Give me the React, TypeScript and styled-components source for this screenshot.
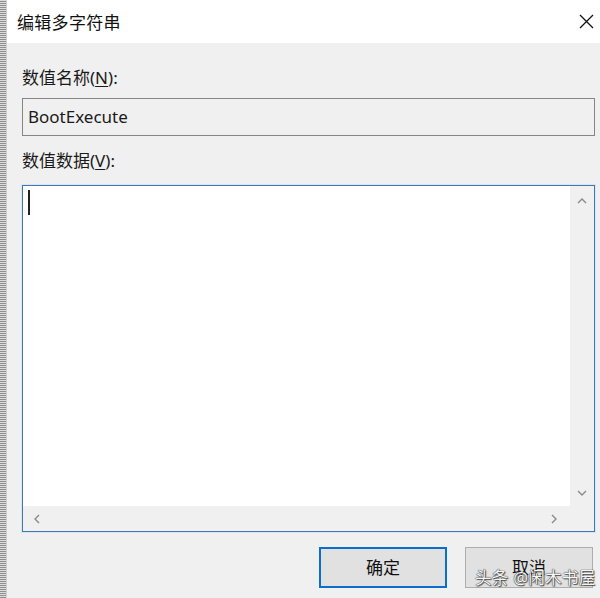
import React from "react";
import styled, { createGlobalStyle } from "styled-components";

const GlobalStyle = createGlobalStyle`
	html, body {
		margin: 0;
		padding: 0;
		background: #f0f0f0;
	}
	body {
		font-family: "Noto Sans", "Noto Sans CJK SC", sans-serif;
		color: #1a1a1a;
	}
`;

function Chevron({ dir }: { dir: "up" | "down" | "left" | "right" }) {
	const points = {
		up: "1,6 5,2 9,6",
		down: "1,2 5,6 9,2",
		left: "6,1 2,5 6,9",
		right: "2,1 6,5 2,9",
	}[dir];
	const vertical = dir === "up" || dir === "down";
	return (
		<svg width={vertical ? 10 : 8} height={vertical ? 8 : 10} viewBox={vertical ? "0 0 10 8" : "0 0 8 10"}>
			<polyline points={points} fill="none" stroke="#8a8a8a" strokeWidth="1.4" />
		</svg>
	);
}

export default function App() {
	return (
		<>
			<GlobalStyle />
			<Screen>
				<LeftStrip />
				<Dialog>
					<TitleBar>
						<Title>编辑多字符串</Title>
						<CloseButton>
							<svg width="15" height="15" viewBox="0 0 15 15">
								<path d="M1 1 L14 14 M14 1 L1 14" stroke="#111" strokeWidth="1.3" fill="none" />
							</svg>
						</CloseButton>
					</TitleBar>
					<Body>
						<Label>
							数值名称(<u>N</u>):
						</Label>
						<NameField>BootExecute</NameField>
						<Label $gapTop>
							数值数据(<u>V</u>):
						</Label>
						<DataField>
							<DataArea>
								<Caret />
							</DataArea>
							<VScroll>
								<Chevron dir="up" />
								<Chevron dir="down" />
							</VScroll>
							<HScroll>
								<Chevron dir="left" />
								<Chevron dir="right" />
							</HScroll>
							<Corner />
						</DataField>
						<ButtonRow>
							<Button $primary>确定</Button>
							<Button>取消</Button>
						</ButtonRow>
					</Body>
					<Watermark>头条 @闲木书屋</Watermark>
				</Dialog>
			</Screen>
		</>
	);
}

const Screen = styled.div`
	width: 600px;
	height: 598px;
	display: flex;
	overflow: hidden;
	background: #f0f0f0;
`;

const LeftStrip = styled.div`
	width: 6px;
	flex-shrink: 0;
	background-image: repeating-linear-gradient(0deg, #8f8f8f 0 1px, #dcdcdc 1px 2px);
	border-right: 1px solid #d0d0d0;
`;

const Dialog = styled.div`
	flex: 1;
	display: flex;
	flex-direction: column;
	position: relative;
`;

const TitleBar = styled.div`
	height: 42px;
	background: #ffffff;
	display: flex;
	align-items: center;
	justify-content: space-between;
	padding: 0 5px 1px 10px;
`;

const Title = styled.div`
	font-size: 17px;
	letter-spacing: 0.3px;
	color: #111;
`;

const CloseButton = styled.div`
	width: 16px;
	height: 16px;
	margin-right: 1px;
	display: flex;
	align-items: center;
	justify-content: center;
`;

const Body = styled.div`
	flex: 1;
	display: flex;
	flex-direction: column;
	padding: 24px 5px 0 15px;
`;

const Label = styled.div<{ $gapTop?: boolean }>`
	font-size: 17px;
	line-height: 22px;
	margin-top: ${(p) => (p.$gapTop ? "14px" : "0")};
	margin-bottom: ${(p) => (p.$gapTop ? "13px" : "9px")};

	u {
		text-underline-offset: 2px;
	}
`;

const NameField = styled.div`
	height: 38px;
	box-sizing: border-box;
	border: 1px solid #858585;
	background: #f0f0f0;
	font-size: 17px;
	display: flex;
	align-items: center;
	padding: 0 0 2px 5px;
	color: #1a1a1a;
`;

const DataField = styled.div`
	height: 347px;
	box-sizing: border-box;
	border: 1px solid #3f78b2;
	box-shadow: 0 0 0 1px #d6e6f4;
	display: grid;
	grid-template-columns: 1fr 24px;
	grid-template-rows: 1fr 25px;
	background: #ffffff;
`;

const DataArea = styled.div`
	padding: 4px 5px;
	background: #ffffff;
`;

const Caret = styled.div`
	width: 2px;
	height: 25px;
	background: #222;
`;

const VScroll = styled.div`
	background: #f0f0f0;
	display: flex;
	flex-direction: column;
	align-items: center;
	justify-content: space-between;
	padding: 11px 0 9px;
`;

const HScroll = styled.div`
	background: #f0f0f0;
	display: flex;
	align-items: center;
	justify-content: space-between;
	padding: 0 12px 0 10px;
`;

const Corner = styled.div`
	background: #f0f0f0;
`;

const ButtonRow = styled.div`
	display: flex;
	justify-content: flex-end;
	gap: 18px;
	margin-top: 15px;
	padding-right: 2px;
`;

const Button = styled.div<{ $primary?: boolean }>`
	width: 128px;
	height: 41px;
	box-sizing: border-box;
	background: #e1e1e1;
	border: ${(p) => (p.$primary ? "2px solid #0a6fcc" : "1px solid #adadad")};
	display: flex;
	align-items: center;
	justify-content: center;
	font-size: 17px;
	padding-bottom: 2px;
	color: #111;
`;

const Watermark = styled.div`
	position: absolute;
	left: 468px;
	top: 565px;
	font-size: 16.5px;
	color: #f6f6f6;
	letter-spacing: 0.3px;
	text-shadow: 0 0 1px #333, 0 0 1px #333, 1px 1px 1px #555;
	white-space: nowrap;
`;
